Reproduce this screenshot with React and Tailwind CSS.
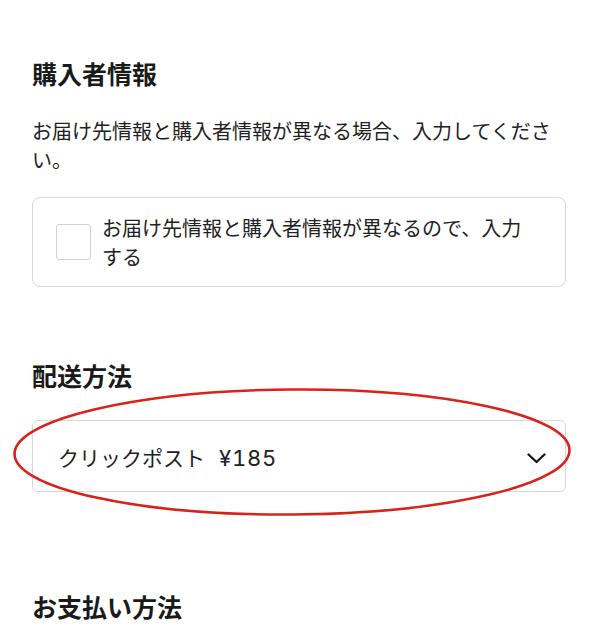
import React, { useState } from 'react';

const FONT = { fontFamily: '"Noto Sans CJK JP", "Noto Sans", sans-serif' };
const DIGITS = { fontFamily: 'Inter, "Noto Sans CJK JP", sans-serif' };

const Chevron = () => (
  <svg width="19" height="11" viewBox="0 0 19 11" fill="none">
    <path d="M1.5 1.5 L9.5 9 L17.5 1.5" stroke="#111" strokeWidth="2.2" strokeLinecap="round" strokeLinejoin="round" />
  </svg>
);

const App = () => {
  const [differs, setDiffers] = useState(false);

  return (
    <div className="min-h-screen bg-white text-[#1c1c1c]" style={FONT}>
      <div className="px-8 pt-[55px]">

        {/* 購入者情報 */}
        <h2 className="text-[25px] leading-[36px] font-bold text-[#1a1a1a]">購入者情報</h2>
        <p className="mt-[25px] text-[20px] leading-[29px] text-[#222]">
          お届け先情報と購入者情報が異なる場合、入力してください。
        </p>

        <label className="mt-[23px] flex items-center gap-[11px] rounded-lg border border-[#d5d8dc] pl-[23px] pr-[30px] py-[15px] cursor-pointer">
          <span
            onClick={() => setDiffers((v) => !v)}
            className={`shrink-0 w-[35px] h-[36px] rounded-[3px] border ${differs ? 'border-[#222] bg-[#222]' : 'border-[#cfd2d6] bg-white'}`}
          />
          <span className="text-[20px] leading-[29px] text-[#222]">
            お届け先情報と購入者情報が異なるので、入力する
          </span>
        </label>

        {/* 配送方法 */}
        <h2 className="mt-[70px] text-[25px] leading-[36px] font-bold text-[#1a1a1a]">配送方法</h2>
        <div className="relative mt-[27px]">
          <div className="h-[72px] flex items-center justify-between rounded-md border border-[#d5d8dc] pl-[25px] pr-[19px] pt-1">
            <span className="text-[21px] text-[#222]">
              クリックポスト
              <span className="ml-[14px] tabular-nums text-[22px] tracking-[0.8px]" style={DIGITS}>¥185</span>
            </span>
            <Chevron />
          </div>
          {/* annotation */}
          <svg
            className="absolute left-[-19px] top-[-32px] pointer-events-none"
            width="558"
            height="128"
            viewBox="0 0 558 128"
            fill="none"
          >
            <ellipse cx="279" cy="64" rx="277.5" ry="62.5" stroke="#d8231a" strokeWidth="2.6" transform="rotate(-0.4 279 64)" />
          </svg>
        </div>

        {/* お支払い方法 */}
        <h2 className="mt-[96px] text-[25px] leading-[36px] font-bold text-[#1a1a1a]">お支払い方法</h2>
      </div>
    </div>
  );
};

export default App;
